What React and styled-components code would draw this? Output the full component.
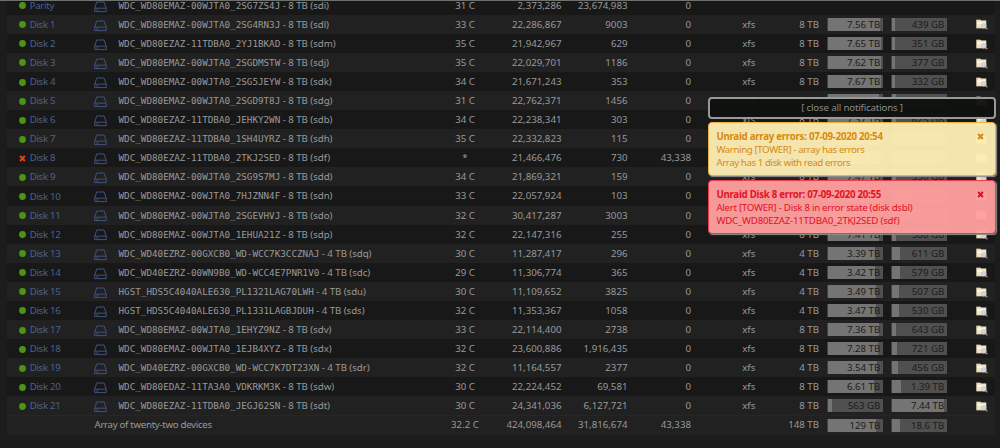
import React from "react";
import styled, { createGlobalStyle } from "styled-components";

const Global = createGlobalStyle`
  body { margin: 0; background: #1c1c1c; overflow: hidden; }
  * { box-sizing: border-box; }
`;

const Page = styled.div`
  position: relative;
  height: 448px;
  overflow: hidden;
  border-top: 1px solid #6c716e;
  background: #1c1c1c;
  color: #999999;
  font-family: "Noto Sans", sans-serif;
  font-size: 9.7px;
  line-height: 19px;
  white-space: pre;
`;

const Table = styled.div`
  margin: -5.3px 5px 0 7px;
`;

const Row = styled.div`
  display: grid;
  grid-template-columns: 87px 24.5px 300px 93px 50px 66px 63.5px 115.5px 12.5px 7.8px 56px 8px 56px 1fr;
  height: 19.08px;
  background: ${(p) => (p.$shade ? "#212121" : "#181818")};
`;

const TotalRow = styled(Row)`
  height: 19.2px;
  border-top: 1px solid #262626;
  line-height: 18px;
`;

const TotalLabel = styled.div`
  padding-left: 0.5px;
  letter-spacing: -0.31px;
`;

const Name = styled.div`
  display: flex;
  align-items: center;
  padding-left: 12.3px;
  gap: 3.4px;
  color: #4a618f;
  letter-spacing: -0.32px;
`;

const Mark = styled.svg`
  width: 7px;
  height: 7px;
  flex: none;
  margin-top: 1px;
`;

const DriveSvg = styled.svg`
  width: 13px;
  height: 12px;
  margin-top: 4.8px;
`;

const Model = styled.span`
  font-family: "DejaVu Sans Mono", monospace;
  font-size: 9.27px;
  letter-spacing: 0;
`;

const Ident = styled.div`
  letter-spacing: -0.05px;
`;

const Center = styled.div`
  text-align: center;
`;

const Right = styled.div`
  display: flex;
  justify-content: flex-end;
`;

const Size = styled(Right)`
  grid-column: 9;
`;

const Bar = styled.div`
  grid-column: ${(p) => p.$col};
  height: 13px;
  margin-top: 3px;
  padding-right: 2.5px;
  border-left: 1px solid #404040;
  background: linear-gradient(90deg, #747474 ${(p) => p.$fill}%, #505050 ${(p) => p.$fill}%);
  color: #1c1c1c;
  line-height: 13px;
  text-align: right;
`;

const Browse = styled.svg`
  grid-column: 14;
  width: 12px;
  height: 11px;
  margin: 4.7px 0 0 29px;
`;

const Notices = styled.div`
  position: absolute;
  top: 96px;
  left: 708px;
  width: 288px;
  display: flex;
  flex-direction: column;
  gap: 3.8px;
`;

const CloseAll = styled.div`
  height: 21.5px;
  border: 2px solid #989998;
  border-radius: 4px;
  background: rgba(14, 17, 12, 0.96);
  color: #8a8a8a;
  line-height: 18px;
  letter-spacing: -0.17px;
  text-align: center;
`;

const Notice = styled.div`
  display: flex;
  justify-content: space-between;
  height: 54px;
  padding: 8px 11.5px 0 7.4px;
  border: 1px solid ${(p) => (p.$alert ? "#f23c4e" : "#eeb244")};
  border-radius: 4px;
  box-shadow: 1px 1px 1px #909090;
  background: ${(p) => (p.$alert ? "rgba(255, 158, 158, 0.96)" : "rgba(253, 237, 180, 0.96)")};
  color: ${(p) => (p.$alert ? "#de1424" : "#d68a10")};
  line-height: 12.8px;
`;

const NoticeTitle = styled.div`
  font-weight: 700;
  letter-spacing: -0.26px;
`;

const NoticeLine = styled.div`
  letter-spacing: ${(p) => p.$tracking}px;
`;

const NoticeClose = styled.svg`
  width: 7px;
  height: 7px;
  margin-top: 2px;
`;

const Cross = () => (
  <path d="M1.1 1.1 L5.9 5.9 M5.9 1.1 L1.1 5.9" stroke="currentColor" strokeWidth="2.1" />
);

const Status = ({ failed }) => (
  <Mark viewBox="0 0 7 7" color="#f03a10">
    {failed ? <Cross /> : <circle cx="3.5" cy="3.5" r="3.4" fill="#4b9414" />}
  </Mark>
);

const Drive = () => (
  <DriveSvg viewBox="0 0 13 12" fill="none" stroke="#40527f" strokeWidth="1">
    <path d="M2.7 1 H10.1 L12.2 7.2 V10.6 H0.7 V7.2 Z M0.7 7.2 H12.2" strokeLinejoin="round" />
    <path d="M2.2 9 H4.6" strokeWidth="0.9" />
  </DriveSvg>
);

const FolderSearch = () => (
  <Browse viewBox="0 0 12 11">
    <path d="M0.3 0.8 H4.4 L5.2 1.6 H10.2 V9.2 H0.3 Z" fill="#efe4c6" stroke="#b09c70" strokeWidth="0.3" />
    <path d="M1 3.2 H9.6 V5 H1 Z" fill="#fbf6e6" />
    <path d="M9.2 8.2 L11.4 10.3" stroke="#a98863" strokeWidth="1.3" />
    <circle cx="7.7" cy="6.7" r="2.5" fill="#c9d5e4" stroke="#bcc4cc" strokeWidth="0.4" />
  </Browse>
);

const disks = [
  ["Parity", "WDC_WD80EMAZ-00WJTA0_2SG7ZS4J", "8 TB (sdi)", "31 C", "2,373,286", "23,674,983", "0"],
  ["Disk 1", "WDC_WD80EMAZ-00WJTA0_2SG4RN3J", "8 TB (sdl)", "33 C", "22,286,867", "9003", "0", "8 TB", "7.56 TB", 95, "439 GB", 5],
  ["Disk 2", "WDC_WD80EZAZ-11TDBA0_2YJ1BKAD", "8 TB (sdm)", "35 C", "21,942,967", "629", "0", "8 TB", "7.65 TB", 96, "351 GB", 5],
  ["Disk 3", "WDC_WD80EMAZ-00WJTA0_2SGDMSTW", "8 TB (sdj)", "35 C", "22,029,701", "1186", "0", "8 TB", "7.62 TB", 96, "377 GB", 5],
  ["Disk 4", "WDC_WD80EMAZ-00WJTA0_2SG5JEYW", "8 TB (sdk)", "34 C", "21,671,243", "353", "0", "8 TB", "7.67 TB", 96, "332 GB", 5],
  ["Disk 5", "WDC_WD80EMAZ-00WJTA0_2SGD9T8J", "8 TB (sdg)", "31 C", "22,762,371", "1456", "0", "8 TB", "7.34 TB", 92, "661 GB", 8],
  ["Disk 6", "WDC_WD80EZAZ-11TDBA0_JEHKY2WN", "8 TB (sdb)", "34 C", "22,238,341", "303", "0", "8 TB", "7.37 TB", 93, "625 GB", 8],
  ["Disk 7", "WDC_WD80EZAZ-11TDBA0_1SH4UYRZ", "8 TB (sdh)", "35 C", "22,332,823", "115", "0", "8 TB", "7.51 TB", 94, "489 GB", 6],
  ["Disk 8", "WDC_WD80EZAZ-11TDBA0_2TKJ2SED", "8 TB (sdf)", "*", "21,466,476", "730", "43,338", "8 TB", "7.51 TB", 94, "490 GB", 6],
  ["Disk 9", "WDC_WD80EMAZ-00WJTA0_2SG9S7MJ", "8 TB (sdd)", "34 C", "21,869,321", "159", "0", "8 TB", "7.47 TB", 93, "530 GB", 7],
  ["Disk 10", "WDC_WD80EMAZ-00WJTA0_7HJZNN4F", "8 TB (sdn)", "33 C", "22,057,924", "103", "0", "8 TB", "7.48 TB", 94, "520 GB", 7],
  ["Disk 11", "WDC_WD80EMAZ-00WJTA0_2SGEVHVJ", "8 TB (sdo)", "32 C", "30,417,287", "3003", "0", "8 TB", "7.46 TB", 93, "538 GB", 7],
  ["Disk 12", "WDC_WD80EMAZ-00WJTA0_1EHUA21Z", "8 TB (sdp)", "32 C", "22,147,316", "255", "0", "8 TB", "7.41 TB", 93, "588 GB", 8],
  ["Disk 13", "WDC_WD40EZRZ-00GXCB0_WD-WCC7K3CCZNAJ", "4 TB (sdq)", "30 C", "11,287,417", "296", "0", "4 TB", "3.39 TB", 86, "611 GB", 15],
  ["Disk 14", "WDC_WD40EZRZ-00WN9B0_WD-WCC4E7PNR1V0", "4 TB (sdc)", "29 C", "11,306,774", "365", "0", "4 TB", "3.42 TB", 86, "579 GB", 15],
  ["Disk 15", "HGST_HDS5C4040ALE630_PL1321LAG70LWH", "4 TB (sdu)", "30 C", "11,109,652", "3825", "0", "4 TB", "3.49 TB", 88, "507 GB", 13],
  ["Disk 16", "HGST_HDS5C4040ALE630_PL1331LAGBJDUH", "4 TB (sds)", "32 C", "11,353,367", "1058", "0", "4 TB", "3.47 TB", 87, "530 GB", 13],
  ["Disk 17", "WDC_WD80EMAZ-00WJTA0_1EHYZ9NZ", "8 TB (sdv)", "33 C", "22,114,400", "2738", "0", "8 TB", "7.36 TB", 92, "643 GB", 8],
  ["Disk 18", "WDC_WD80EMAZ-00WJTA0_1EJB4XYZ", "8 TB (sdx)", "32 C", "23,600,886", "1,916,435", "0", "8 TB", "7.28 TB", 91, "721 GB", 9],
  ["Disk 19", "WDC_WD40EZRZ-00GXCB0_WD-WCC7K7DT23XN", "4 TB (sdr)", "32 C", "11,164,557", "2377", "0", "4 TB", "3.54 TB", 89, "456 GB", 11],
  ["Disk 20", "WDC_WD80EDAZ-11TA3A0_VDKRKM3K", "8 TB (sdw)", "30 C", "22,224,452", "69,581", "0", "8 TB", "6.61 TB", 83, "1.39 TB", 17],
  ["Disk 21", "WDC_WD80EZAZ-11TDBA0_JEGJ62SN", "8 TB (sdt)", "30 C", "24,341,036", "6,127,721", "0", "8 TB", "563 GB", 7, "7.44 TB", 94],
];

const DiskRow = ({ disk, shade }) => {
  const [name, model, detail, temp, reads, writes, errors, size, used, usedPct, free, freePct] = disk;
  return (
    <Row $shade={shade}>
      <Name><Status failed={temp === "*"} />{name}</Name>
      <Drive />
      <Ident><Model>{model}</Model>{" - " + detail}</Ident>
      <Center>{temp}</Center>
      <Right>{reads}</Right>
      <Right>{writes}</Right>
      <Right>{errors}</Right>
      {size && (
        <>
          <Center>xfs</Center>
          <Size>{size}</Size>
          <Bar $col={11} $fill={usedPct}>{used}</Bar>
          <Bar $col={13} $fill={freePct}>{free}</Bar>
          <FolderSearch />
        </>
      )}
    </Row>
  );
};

export default function App() {
  return (
    <>
      <Global />
      <Page>
        <Table>
          {disks.map((disk, i) => <DiskRow key={disk[0]} disk={disk} shade={i % 2 === 1} />)}
          <TotalRow $shade>
            <div />
            <TotalLabel>Array of twenty-two devices</TotalLabel>
            <div />
            <Center>32.2 C</Center>
            <Right>424,098,464</Right>
            <Right>31,816,674</Right>
            <Right>43,338</Right>
            <div />
            <Size>148 TB</Size>
            <Bar $col={11} $fill={87}>129 TB</Bar>
            <Bar $col={13} $fill={14}>18.6 TB</Bar>
          </TotalRow>
        </Table>
        <Notices>
          <CloseAll>[ close all notifications ]</CloseAll>
          <Notice>
            <div>
              <NoticeTitle>Unraid array errors: 07-09-2020 20:54</NoticeTitle>
              <NoticeLine $tracking={-0.39}>Warning [TOWER] - array has errors</NoticeLine>
              <NoticeLine $tracking={-0.41}>Array has 1 disk with read errors</NoticeLine>
            </div>
            <NoticeClose viewBox="0 0 7 7"><Cross /></NoticeClose>
          </Notice>
          <Notice $alert>
            <div>
              <NoticeTitle>Unraid Disk 8 error: 07-09-2020 20:55</NoticeTitle>
              <NoticeLine $tracking={-0.27}>Alert [TOWER] - Disk 8 in error state (disk dsbl)</NoticeLine>
              <NoticeLine $tracking={-0.22}>WDC_WD80EZAZ-11TDBA0_2TKJ2SED (sdf)</NoticeLine>
            </div>
            <NoticeClose viewBox="0 0 7 7"><Cross /></NoticeClose>
          </Notice>
        </Notices>
      </Page>
    </>
  );
}
